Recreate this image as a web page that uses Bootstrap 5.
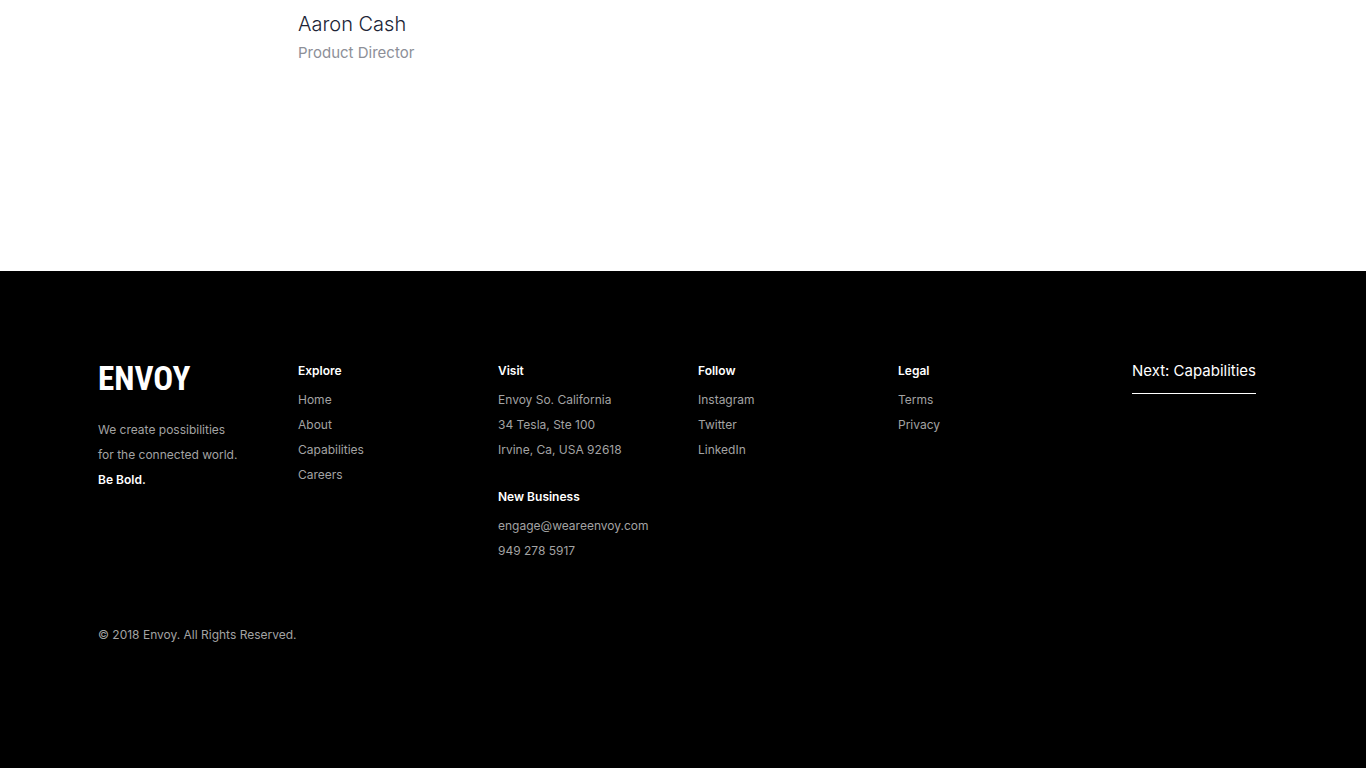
<!DOCTYPE html>
<html lang="en">
<head>
<meta charset="utf-8">
<meta name="viewport" content="width=device-width, initial-scale=1">
<title>Envoy</title>
<link href="https://cdn.jsdelivr.net/npm/bootstrap@5.3.0/dist/css/bootstrap.min.css" rel="stylesheet">
<style>
  body { font-family: Inter, "Liberation Sans", sans-serif; }
  .site-width { max-width: 1200px; --bs-gutter-x: 30px; }
  .site-width > .row { --bs-gutter-x: 30px; }
  .person { padding-top: 8px; padding-bottom: 206px; }
  .person-name { font-size: 20px; line-height: 32px; font-weight: 300; color: #202436; }
  .person-role { font-size: 15px; line-height: 25px; color: #8d8f98; }
  .site-footer { background: #000; color: #a3a3a3; font-size: 12px; line-height: 25px; padding-top: 87px; }
  .site-footer h2 { font-size: 12px; line-height: 25px; font-weight: 600; color: #fff; margin-bottom: 4px; }
  .site-footer .group-gap { margin-top: 22px; }
  .site-footer a { color: inherit; text-decoration: none; }
  .site-footer a:hover { color: #fff; }
  .site-footer .wordmark { display: block; font-family: "Roboto Condensed", Roboto, sans-serif; font-size: 33px; line-height: 42px; font-weight: 700; color: #fff; margin-bottom: 17px; }
  .next-wrap { padding-right: 12px; }
  .site-footer .next-link { display: inline-block; font-size: 15px; line-height: 25px; color: #fff; padding-bottom: 10px; border-bottom: 1px solid #fff; }
  .copyright { margin-top: 59px; }
</style>
</head>
<body>
<div class="d-flex flex-column min-vh-100">
  <main class="container-fluid site-width">
    <div class="row">
      <div class="col-10 offset-2 person">
        <p class="person-name mb-0">Aaron Cash</p>
        <p class="person-role mb-0">Product Director</p>
      </div>
    </div>
  </main>
  <footer class="site-footer flex-grow-1">
    <div class="container-fluid site-width">
      <div class="row">
        <div class="col-6 col-lg-2 text-nowrap">
          <a class="wordmark" href="#">ENVOY</a>
          <p class="mb-0">We create possibilities<br>for the connected world.</p>
          <a class="fw-semibold text-white" href="#">Be Bold.</a>
        </div>
        <nav class="col-6 col-lg-2" aria-label="Explore">
          <h2>Explore</h2>
          <ul class="list-unstyled mb-0">
            <li><a href="#">Home</a></li>
            <li><a href="#">About</a></li>
            <li><a href="#">Capabilities</a></li>
            <li><a href="#">Careers</a></li>
          </ul>
        </nav>
        <div class="col-6 col-lg-2 text-nowrap">
          <h2>Visit</h2>
          <address class="mb-0">Envoy So. California<br>34 Tesla, Ste 100<br>Irvine, Ca, USA 92618</address>
          <h2 class="group-gap">New Business</h2>
          <ul class="list-unstyled mb-0">
            <li><a href="#">engage@weareenvoy.com</a></li>
            <li><a href="#">949 278 5917</a></li>
          </ul>
        </div>
        <nav class="col-6 col-lg-2" aria-label="Follow">
          <h2>Follow</h2>
          <ul class="list-unstyled mb-0">
            <li><a href="#">Instagram</a></li>
            <li><a href="#">Twitter</a></li>
            <li><a href="#">LinkedIn</a></li>
          </ul>
        </nav>
        <nav class="col-6 col-lg-2" aria-label="Legal">
          <h2>Legal</h2>
          <ul class="list-unstyled mb-0">
            <li><a href="#">Terms</a></li>
            <li><a href="#">Privacy</a></li>
          </ul>
        </nav>
        <div class="col-6 col-lg-2 text-lg-end text-nowrap">
          <div class="next-wrap"><a class="next-link" href="#">Next: Capabilities</a></div>
        </div>
      </div>
      <p class="copyright mb-0">© 2018 Envoy. All Rights Reserved.</p>
    </div>
  </footer>
</div>
<script src="https://cdn.jsdelivr.net/npm/bootstrap@5.3.0/dist/js/bootstrap.bundle.min.js"></script>
</body>
</html>
